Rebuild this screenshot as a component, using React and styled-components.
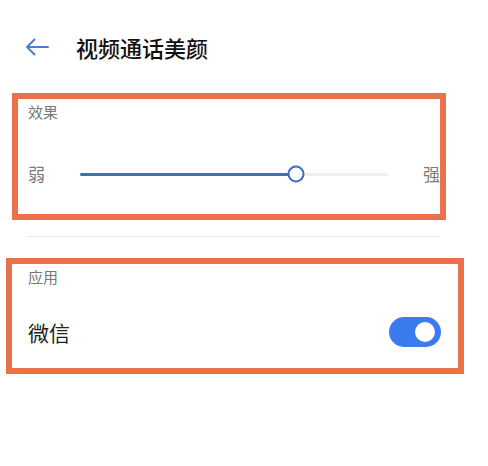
import React from "react";
import styled, { createGlobalStyle } from "styled-components";

const Global = createGlobalStyle`
  html, body { margin: 0; padding: 0; background: #fff; }
  body { font-family: "Noto Sans CJK SC", "Noto Sans", sans-serif; }
  * { box-sizing: border-box; }
`;

const Page = styled.div`
  width: 488px;
  height: 466px;
  background: #fff;
  display: flex;
  flex-direction: column;
  overflow: hidden;
`;

const Header = styled.div`
  display: flex;
  align-items: center;
  height: 40px;
  margin-top: 27px;
  padding-left: 25px;
`;

const BackIcon = styled.svg`
  width: 24px;
  height: 18px;
  flex: none;
`;

const Title = styled.h1`
  margin: 0 0 0 27px;
  font-size: 22px;
  line-height: 30px;
  font-weight: 500;
  color: #111;
`;

const Section = styled.section`
  border: 6px solid #ea7149;
  margin: ${(p) => p.$margin};
  padding: ${(p) => p.$padding};
  display: flex;
  flex-direction: column;
`;

const SectionLabel = styled.div`
  font-size: 15px;
  line-height: 20px;
  color: #777;
`;

const SliderRow = styled.div`
  display: flex;
  align-items: center;
  height: 20px;
  margin-top: 42px;
`;

const SideText = styled.span`
  font-size: 17px;
  line-height: 20px;
  color: #7a7a7a;
  width: 17px;
  flex: none;
`;

const Track = styled.div`
  position: relative;
  flex: 1;
  height: 3px;
  margin: 0 34px 0 35px;
  background: #efefef;
  border-radius: 2px;
`;

const Fill = styled.div`
  height: 100%;
  background: #3b6fc3;
  border-radius: 2px;
`;

const Thumb = styled.div`
  position: absolute;
  top: 50%;
  width: 17px;
  height: 17px;
  border-radius: 50%;
  border: 2.5px solid #3b6fc3;
  background: #fff;
  transform: translate(-50%, -50%);
`;

const Divider = styled.div`
  height: 1px;
  background: #e6e6e6;
  margin: 16px 0 0 28px;
  width: 412px;
`;

const ItemRow = styled.div`
  display: flex;
  align-items: center;
  justify-content: space-between;
  margin-top: 30px;
`;

const ItemText = styled.span`
  font-size: 21px;
  line-height: 30px;
  color: #222;
`;

const Toggle = styled.div`
  width: 52px;
  height: 30px;
  border-radius: 15px;
  background: ${(p) => (p.$on ? "#3a7bf0" : "#ccc")};
  display: flex;
  align-items: center;
  justify-content: ${(p) => (p.$on ? "flex-end" : "flex-start")};
  padding: 0 6px;
`;

const Knob = styled.div`
  width: 20px;
  height: 20px;
  border-radius: 50%;
  background: #fff;
`;

export default function App() {
  const value = 0.698;
  return (
    <>
      <Global />
      <Page>
        <Header>
          <BackIcon viewBox="0 0 24 18" fill="none">
            <path
              d="M23 9H2M9.5 1.5L2 9l7.5 7.5"
              stroke="#4a7ec8"
              strokeWidth="2"
              strokeLinecap="round"
              strokeLinejoin="round"
            />
          </BackIcon>
          <Title>视频通话美颜</Title>
        </Header>

        <Section $margin="26px 42px 0 12px" $padding="3px 0 30px 10px">
          <SectionLabel>效果</SectionLabel>
          <SliderRow>
            <SideText>弱</SideText>
            <Track>
              <Fill style={{ width: `${value * 100}%` }} />
              <Thumb style={{ left: `${value * 100}%` }} />
            </Track>
            <SideText>强</SideText>
          </SliderRow>
        </Section>

        <Divider />

        <Section $margin="21px 24px 0 6px" $padding="3px 17px 21px 16px">
          <SectionLabel>应用</SectionLabel>
          <ItemRow>
            <ItemText>微信</ItemText>
            <Toggle $on>
              <Knob />
            </Toggle>
          </ItemRow>
        </Section>
      </Page>
    </>
  );
}
